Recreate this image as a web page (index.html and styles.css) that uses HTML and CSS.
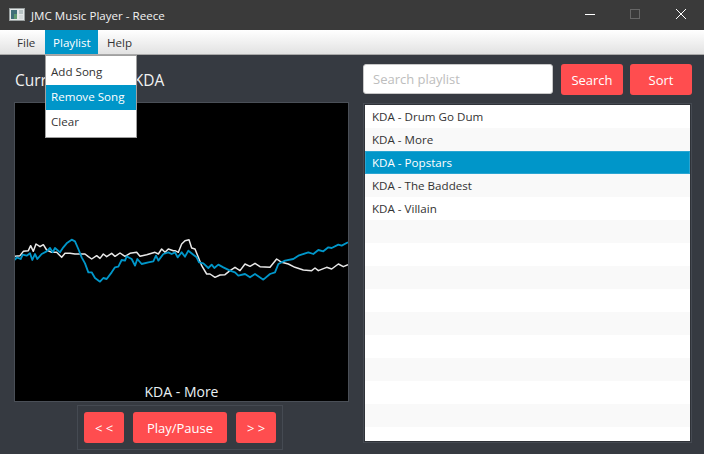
FILE: index.html
```html
<!DOCTYPE html>
<html lang="en">
<head>
  <meta charset="UTF-8">
  <meta name="viewport" content="width=device-width, initial-scale=1.0">
  <title>JMC Music Player - Reece</title>
  <link rel="stylesheet" href="styles.css">
</head>
<body>
  <div class="titlebar">
    <svg class="app-icon" width="16" height="14" viewBox="0 0 16 14">
      <rect x="0.5" y="0.5" width="15" height="12" fill="#e4e8e8" stroke="#9aa0a0"/>
      <rect x="2" y="2" width="6" height="9" fill="#3f6f78"/>
      <rect x="5" y="6" width="3" height="5" fill="#5f9a70"/>
      <rect x="10" y="2" width="4" height="4" fill="#b8c4c4"/>
      <rect x="10" y="7" width="4" height="4" fill="#d6dcdc"/>
    </svg>
    <span class="app-title">JMC Music Player - Reece</span>
    <div class="window-buttons">
      <svg width="12" height="12" viewBox="0 0 12 12"><path d="M0 6.5H10" stroke="#fff" stroke-width="1"/></svg>
      <svg width="12" height="12" viewBox="0 0 12 12"><rect x="0.5" y="1.5" width="9" height="9" fill="none" stroke="#666"/></svg>
      <svg width="12" height="12" viewBox="0 0 12 12"><path d="M1 1L11 11M11 1L1 11" stroke="#fff" stroke-width="1"/></svg>
    </div>
  </div>

  <div class="menubar">
    <div class="menu menu-file">File</div>
    <div class="menu menu-open">
      Playlist
      <div class="dropdown">
        <div class="dropdown-item">Add Song</div>
        <div class="dropdown-item dropdown-active">Remove Song</div>
        <div class="dropdown-item">Clear</div>
      </div>
    </div>
    <div class="menu menu-help">Help</div>
  </div>

  <div class="main">
    <div class="left">
      <div class="now-label">Current Album: KDA</div>
      <div class="visualizer">
        <svg class="wave" viewBox="45 -363 999 894" preserveAspectRatio="none">
          <polyline class="wave-white" points="45,97 60,95 70,82 85,80 92,65 100,82 108,60 120,68 130,62 140,78 155,85 170,85 185,100 195,88 210,88 225,90 240,90 255,90 265,98 275,105 290,95 300,103 310,90 320,98 335,88 345,97 360,87 375,97 390,88 410,85 420,97 440,92 465,85 475,90 485,75 495,85 505,75 520,80 525,80 535,85 545,60 555,50 567,47 575,72 585,75 595,100 605,125 620,150 630,150 645,160 660,153 675,152 690,140 705,130 720,140 735,120 750,127 765,118 780,128 810,130 830,105 845,115 865,120 885,130 910,138 935,140 945,132 955,140 980,130 995,135 1015,120 1030,128 1044,122"/>
          <polyline class="wave-blue" points="45,108 50,100 62,105 68,92 80,95 90,88 97,108 105,90 112,105 125,90 140,82 150,72 158,85 165,72 180,85 190,70 200,58 215,47 225,52 235,75 245,100 255,118 265,145 275,145 285,162 300,173 310,162 320,165 335,145 345,130 355,128 365,108 375,110 380,97 395,105 405,125 412,105 425,120 445,115 460,112 468,95 475,110 490,90 505,85 515,90 525,85 533,100 545,85 555,98 565,80 580,92 590,100 597,115 610,118 625,132 635,122 643,132 655,122 670,130 690,140 705,145 715,155 735,150 750,160 765,150 790,167 810,150 825,145 835,120 855,110 880,105 895,95 925,85 940,90 955,78 970,82 985,70 995,72 1015,62 1025,65 1044,55"/>
        </svg>
        <div class="song-name">KDA - More</div>
      </div>
      <div class="controls">
        <button class="btn btn-skip">&lt; &lt;</button>
        <button class="btn btn-play">Play/Pause</button>
        <button class="btn btn-skip">&gt; &gt;</button>
      </div>
    </div>

    <div class="right">
      <div class="search-row">
        <input class="search" type="text" placeholder="Search playlist">
        <button class="btn btn-search">Search</button>
        <button class="btn btn-search">Sort</button>
      </div>
      <div class="playlist">
        <div class="row">KDA - Drum Go Dum</div>
        <div class="row">KDA - More</div>
        <div class="row row-selected">KDA - Popstars</div>
        <div class="row">KDA - The Baddest</div>
        <div class="row">KDA - Villain</div>
        <div class="row"></div>
        <div class="row"></div>
        <div class="row"></div>
        <div class="row"></div>
        <div class="row"></div>
        <div class="row"></div>
        <div class="row"></div>
        <div class="row"></div>
        <div class="row"></div>
        <div class="row"></div>
      </div>
    </div>
  </div>
</body>
</html>
```

FILE: styles.css
```css
* {
  box-sizing: border-box;
}
html, body {
  height: 100%;
}
body {
  margin: 0;
  overflow: hidden;
  display: flex;
  flex-direction: column;
  background-color: #363a41;
  font-family: "Open Sans", "Noto Sans", sans-serif;
  font-size: 11.6px;
  color: #333;
}

.titlebar {
  height: 30px;
  display: flex;
  align-items: center;
  padding-left: 9px;
  background-color: #3a3a3a;
  color: #fff;
}
.app-icon {
  margin-right: 6px;
}
.app-title {
  font-size: 11.6px;
  color: #f2f2f2;
}
.window-buttons {
  margin-left: auto;
  margin-bottom: 2px;
  display: flex;
  gap: 33px;
  padding-right: 17px;
}

.menubar {
  height: 25px;
  display: flex;
  padding-left: 9px;
  padding-bottom: 1px;
  background: linear-gradient(#ffffff, #e2e2e2);
  border-bottom: 1px solid #a9a9a9;
  position: relative;
}
.menu {
  padding: 5px 8px 3px;
  line-height: 16px;
}
.menu-file {
  width: 36px;
}
.menu-help {
  margin-left: 1px;
}
.menu-open {
  background-color: #0096c9;
  color: #fff;
  position: relative;
  width: 53px;
  white-space: nowrap;
  margin-bottom: -1px;
}
.dropdown {
  position: absolute;
  top: 25px;
  left: 0;
  width: 92px;
  height: 83px;
  padding-top: 4px;
  background-color: #fff;
  border: 1px solid #a0a0a0;
  color: #333;
  z-index: 5;
}
.dropdown-item {
  height: 25px;
  padding: 4px 5px 5px;
  line-height: 16px;
}
.dropdown-active {
  background-color: #0096c9;
  color: #fff;
}

.main {
  flex: 1;
  display: flex;
  min-height: 0;
  padding: 9px 12px 4px 14px;
  gap: 14px;
}
.left {
  width: 335px;
  display: flex;
  flex-direction: column;
}
.now-label {
  height: 39px;
  padding: 5px 0 0 1px;
  font-size: 15.5px;
  word-spacing: 2px;
  line-height: 22px;
  color: #f2f2f2;
}
.visualizer {
  position: relative;
  height: 300px;
  background-color: #000;
  border: 1px solid #4a4f57;
}
.wave {
  display: block;
  width: 100%;
  height: 100%;
}
.wave polyline {
  fill: none;
  stroke-width: 5.5;
  stroke-linejoin: round;
}
.wave .wave-white {
  stroke: #e8e8e8;
  stroke-width: 4.5;
}
.wave-blue {
  stroke: #0096c9;
}
.song-name {
  position: absolute;
  left: 0;
  right: 0;
  bottom: 0;
  text-align: center;
  font-size: 14px;
  line-height: 18px;
  color: #e8f0f4;
}
.controls {
  margin: 3px 0 0 63px;
  display: flex;
  gap: 9px;
  padding: 6px;
  border: 1px solid #454a52;
  width: 206px;
  height: 45px;
}

.btn {
  border: none;
  border-radius: 3px;
  background-color: #ff4d4f;
  color: #fff;
  font-family: inherit;
  font-size: 13px;
  padding: 0;
  height: 31px;
}
.btn-skip {
  width: 40px;
}
.btn-play {
  width: 94px;
}

.right {
  flex: 1;
  display: flex;
  flex-direction: column;
}
.search-row {
  height: 39px;
  display: flex;
  align-items: flex-start;
  gap: 7px;
}
.search {
  width: 190px;
  height: 30px;
  margin-right: 1px;
  padding: 0 9px;
  background-color: #fff;
  border: 1px solid #c8c8c8;
  border-radius: 3px;
  font-family: inherit;
  font-size: 13px;
}
.search::placeholder {
  color: #bdbdbd;
}
.btn-search {
  width: 62px;
}
.playlist {
  flex: 1;
  min-height: 0;
  margin-bottom: 7px;
  overflow: hidden;
  background-color: #fff;
  border: 2px solid #2f3238;
  outline: 1px solid #454a52;
  outline-offset: -1px;
}
.row {
  height: 23px;
  padding-left: 7px;
  line-height: 23px;
  background-color: #fff;
}
.row:nth-child(even) {
  background-color: #f9f9f9;
}
.row.row-selected {
  background-color: #0096c9;
  color: #fff;
  line-height: 21px;
  padding-left: 6px;
  border: 1px solid #2aa5d2;
}
```
